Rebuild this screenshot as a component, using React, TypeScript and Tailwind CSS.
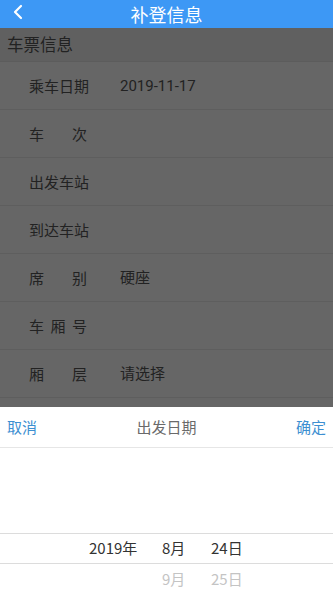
import { ChevronLeft } from 'lucide-react';

const rows: { label: string[]; value?: string }[] = [
  { label: ['乘', '车', '日', '期'], value: '2019-11-17' },
  { label: ['车', '次'] },
  { label: ['出', '发', '车', '站'] },
  { label: ['到', '达', '车', '站'] },
  { label: ['席', '别'], value: '硬座' },
  { label: ['车', '厢', '号'] },
  { label: ['厢', '层'], value: '请选择' },
];

export default function App() {
  return (
    <div
      className="relative h-[594px] w-[333px] overflow-hidden bg-[#666666]"
      style={{ fontFamily: '"Noto Sans CJK SC", "Noto Sans", Roboto, sans-serif' }}
    >
      {/* Title bar */}
      <div className="relative flex h-[28px] items-center justify-center bg-[#3d98f5]">
        <ChevronLeft className="absolute left-[6px] top-[0px] h-[24px] w-[24px] text-white" strokeWidth={2.2} />
        <span className="text-[18px] leading-none text-white">补登信息</span>
      </div>

      {/* Section header */}
      <div className="flex h-[34px] items-center border-b border-[#5c5c5c] bg-[#606060] pl-[7px] text-[16.5px] text-[#222]">
        车票信息
      </div>

      {/* Form rows */}
      <div className="flex flex-col">
        {rows.map((row, i) => (
          <div key={i} className="flex h-[48px] items-center border-b border-[#5e5e5e] pl-[29px] pt-[2px] text-[15px] text-[#222]">
            <div className="flex w-[58px] justify-between">
              {row.label.map((c, j) => (
                <span key={j}>{c}</span>
              ))}
            </div>
            {row.value && <span className="ml-[33px] font-['Roboto','Noto_Sans_CJK_SC',sans-serif]">{row.value}</span>}
          </div>
        ))}
      </div>

      {/* Date picker sheet */}
      <div className="absolute inset-x-0 bottom-0 h-[187px] bg-white">
        <div className="flex h-[41px] items-center justify-between border-b border-[#e6e6e6] px-[7px] text-[15px]">
          <span className="text-[#3d8fd1]">取消</span>
          <span className="text-[#6a6a6a]">出发日期</span>
          <span className="text-[#3d8fd1]">确定</span>
        </div>
        <div className="h-[85px]" />
        <div className="flex h-[31px] items-center border-y border-[#dcdcdc] text-[15px] text-[#333]">
          <span className="ml-[89px] w-[73px]">2019年</span>
          <span className="w-[49px]">8月</span>
          <span>24日</span>
        </div>
        <div className="flex h-[30px] items-center text-[15px] text-[#c4c4c4]">
          <span className="ml-[162px] w-[49px]">9月</span>
          <span>25日</span>
        </div>
      </div>
    </div>
  );
}
